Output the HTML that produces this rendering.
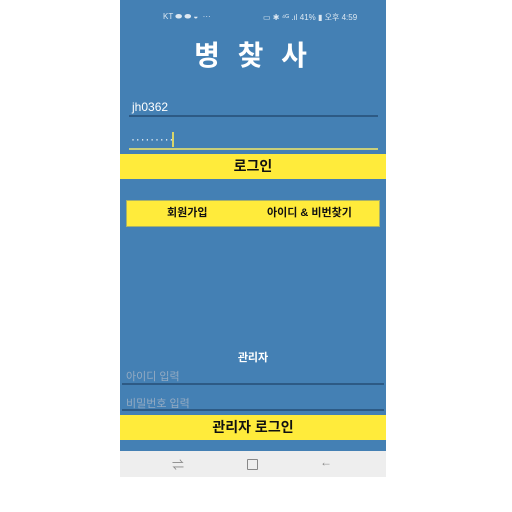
<!DOCTYPE html><html><head><meta charset="utf-8"><style>
body{margin:0;width:512px;height:512px;background:#fff;position:relative;overflow:hidden;font-family:"Liberation Sans","Noto Sans CJK KR",sans-serif}
.s{position:absolute;left:120px;top:0;width:266px;height:451px;background:#4480b4}
.a{position:absolute;white-space:nowrap}
.y{position:absolute;background:#ffeb3b;text-align:center;font-weight:bold;color:#111}
.n{position:absolute;left:120px;top:451px;width:266px;height:26px;background:#eeeeee}
</style></head><body>
<div class="s"></div>
<div class="a" style="left:163px;top:12px;font-size:8px;color:#dde8f2">KT ⬬ ⬬ ◒ &nbsp;···</div>
<div class="a" style="left:263px;top:12px;font-size:8px;color:#dde8f2">▭ ✱ ⁴ᴳ .ıl 41% ▮ 오후 4:59</div>
<div class="a" style="left:120px;width:266px;text-align:center;top:34px;font-size:28px;font-weight:bold;color:#fff;letter-spacing:5px">병 찾 사</div>
<div class="a" style="left:132px;top:100px;font-size:12px;color:#fff">jh0362</div>
<div style="position:absolute;left:129px;top:115px;width:249px;height:2px;background:#2d5a85"></div>
<div class="a" style="left:131px;top:132px;font-size:12px;color:#fff;letter-spacing:0.8px">·········</div>
<div style="position:absolute;left:172px;top:132px;width:2px;height:15px;background:#d8d56a"></div>
<div style="position:absolute;left:129px;top:148px;width:249px;height:2px;background:#c9cf7a"></div>
<div class="y" style="left:120px;top:154px;width:266px;height:25px;line-height:25px;font-size:14px">로그인</div>
<div class="y" style="left:126px;top:200px;width:252px;height:25px;border:1px solid #a8b26a;font-size:11px;line-height:25px">
<span class="a" style="left:40px">회원가입</span><span class="a" style="left:140px">아이디 &amp; 비번찾기</span></div>
<div class="a" style="left:120px;width:266px;text-align:center;top:349px;font-size:11px;color:#fff;font-weight:bold">관리자</div>
<div class="a" style="left:126px;top:368px;font-size:11px;color:#93aac2">아이디 입력</div>
<div style="position:absolute;left:122px;top:383px;width:262px;height:2px;background:#2d5a85"></div>
<div class="a" style="left:126px;top:395px;font-size:11px;color:#93aac2">비밀번호 입력</div>
<div style="position:absolute;left:122px;top:409px;width:262px;height:2px;background:#2d5a85"></div>
<div class="y" style="left:120px;top:415px;width:266px;height:25px;line-height:25px;font-size:14px">관리자 로그인</div>
<div class="n"></div>
<div class="a" style="left:172px;top:456px;font-size:12px;color:#888">⇌</div>
<div style="position:absolute;left:247px;top:459px;width:9px;height:9px;border:1px solid #888;border-radius:1px"></div>
<div class="a" style="left:320px;top:455px;font-size:12px;color:#888">←</div>
</body></html>
